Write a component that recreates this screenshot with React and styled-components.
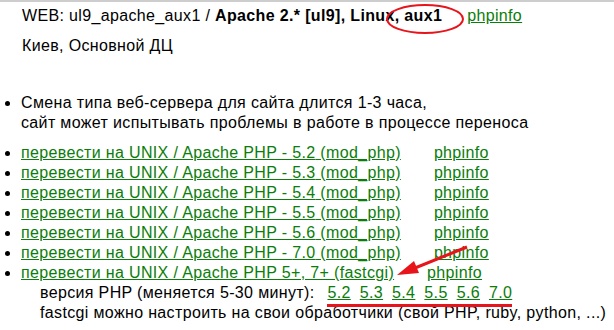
import React from 'react'
import styled, { createGlobalStyle } from 'styled-components'

const GlobalStyle = createGlobalStyle`
	html, body {
		margin: 0;
		padding: 0;
		background: #fff;
	}
`

const Page = styled.div`
	position: relative;
	width: 614px;
	height: 330px;
	box-sizing: border-box;
	border-top: 2px solid #cdcdcd;
	padding: 4px 0 0 22px;
	overflow: hidden;
	font-family: 'Liberation Sans', Arial, sans-serif;
	font-size: 16px;
	letter-spacing: 0.35px;
	line-height: 20px;
	color: #000;
`

const Line = styled.div`
	margin-top: ${(p) => p.$gap || 0}px;
	white-space: nowrap;
`

const Bold = styled.b`
	font-weight: bold;
`

const Link = styled.a`
	color: #0a7d0a;
	text-decoration: underline;
	margin-left: ${(p) => p.$offset || 0}px;
	cursor: pointer;
`

const List = styled.ul`
	margin: ${(p) => p.$gap || 0}px 0 0 -22px;
	padding: 0 0 0 21px;
	list-style: disc;
	white-space: nowrap;
`

const Item = styled.li`
	padding: 0;
`

const Sub = styled.div`
	padding-left: 19px;
	color: #000;
`

const Versions = styled.span`
	display: inline-flex;
	gap: 9px;
	margin-left: 13px;
`

const Overlay = styled.svg`
	position: absolute;
	left: 0;
	top: 0;
	pointer-events: none;
`

const modPhp = ['5.2', '5.3', '5.4', '5.5', '5.6', '7.0']
const versions = ['5.2', '5.3', '5.4', '5.5', '5.6', '7.0']

const App = () => (
	<Page>
		<GlobalStyle />
		<Line>
			WEB: ul9_apache_aux1 / <Bold>Apache 2.*</Bold> <Bold>[ul9], Linux, aux1</Bold>
			<Link $offset={25}>phpinfo</Link>
		</Line>
		<Line $gap={10}>Киев, Основной ДЦ</Line>

		<List $gap={37}>
			<Item>
				Смена типа веб-сервера для сайта длится 1-3 часа,
				<br />
				сайт может испытывать проблемы в работе в процессе переноса
			</Item>
		</List>

		<List $gap={10}>
			{modPhp.map((v) => (
				<Item key={v}>
					<Link>перевести на UNIX / Apache PHP - {v} (mod_php)</Link>
					<Link $offset={33}>phpinfo</Link>
				</Item>
			))}
			<Item>
				<Link>перевести на UNIX / Apache PHP 5+, 7+ (fastcgi)</Link>
				<Link $offset={33}>phpinfo</Link>
				<Sub>
					версия PHP (меняется 5-30 минут):
					<Versions>
						{versions.map((v) => (
							<Link key={v}>{v}</Link>
						))}
					</Versions>
				</Sub>
				<Sub>fastcgi можно настроить на свои обработчики (свой PHP, ruby, python, ...)</Sub>
			</Item>
		</List>

		<Overlay width='614' height='330' viewBox='0 0 614 330'>
			<ellipse cx='425' cy='17' rx='38' ry='14' fill='none' stroke='#e8141b' strokeWidth='2' />
			<line x1='467' y1='245' x2='410' y2='268' stroke='#e8141b' strokeWidth='3' />
			<polygon points='397,273 414,259 419,271' fill='#e8141b' />
			<rect x='327' y='302' width='185' height='3' fill='#e8141b' />
		</Overlay>
	</Page>
)

export default App
